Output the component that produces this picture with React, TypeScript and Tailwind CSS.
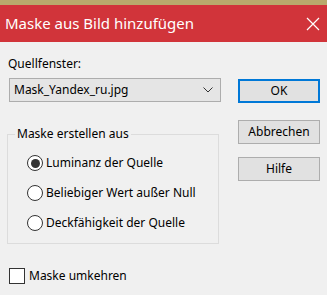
import React, { useState } from 'react';

const font = { fontFamily: '"Noto Sans", "Open Sans", sans-serif' };

const Radio: React.FC<{ checked: boolean; label: string; onClick: () => void }> = ({ checked, label, onClick }) => (
  <div className="flex items-center h-[30px] cursor-default" onClick={onClick}>
    <span className="w-[16px] h-[16px] rounded-full border border-[#333333] bg-white flex items-center justify-center">
      {checked && <span className="w-[9px] h-[9px] rounded-full bg-[#333333]" />}
    </span>
    <span className="ml-[3px] text-[12px] text-black">{label}</span>
  </div>
);

const Button: React.FC<{ label: string; primary?: boolean }> = ({ label, primary }) => (
  <button
    className={`w-[82px] h-[24px] bg-[#e1e1e1] text-[12px] text-black flex items-center justify-center ${
      primary ? 'border-2 border-[#0078d7]' : 'border border-[#adadad]'
    }`}
  >
    {label}
  </button>
);

const App: React.FC = () => {
  const [mode, setMode] = useState(0);
  const [invert, setInvert] = useState(false);
  const options = ['Luminanz der Quelle', 'Beliebiger Wert außer Null', 'Deckfähigkeit der Quelle'];

  return (
    <div className="w-[327px] h-[295px] bg-[#f0f0f0] overflow-hidden" style={font}>
      {/* Window edge + title bar */}
      <div className="h-[5px] bg-[#b9a96c]" />
      <div className="h-[37px] bg-[#d1343a] flex items-center justify-between pl-[5px] pr-[6px]">
        <span className="text-[15px] text-white">Maske aus Bild hinzufügen</span>
        <svg width="14" height="14" viewBox="0 0 14 14" className="mr-[1px]">
          <path d="M1 1L13 13M13 1L1 13" stroke="white" strokeWidth="1.2" />
        </svg>
      </div>

      <div className="flex">
        {/* Left column */}
        <div className="w-[229px] pl-[7px]">
          <div className="mt-[14px] pl-[1px] text-[12px] leading-[16px] text-black">Quellfenster:</div>
          <div className="mt-[6px] ml-[2px] w-[212px] h-[24px] border border-[#adadad] bg-[#e5e5e5] flex items-center justify-between pl-[4px] pr-[7px]">
            <span className="text-[12px] text-black">Mask_Yandex_ru.jpg</span>
            <svg width="10" height="6" viewBox="0 0 10 6">
              <path d="M0.5 0.5L5 5L9.5 0.5" stroke="#333" strokeWidth="1" fill="none" />
            </svg>
          </div>

          {/* Group box */}
          <div className="relative mt-[32px] w-[212px] h-[110px] border border-[#dcdcdc] pl-[19px] pt-[13px]">
            <span className="absolute -top-[9px] left-[7px] px-[2px] bg-[#f0f0f0] text-[12px] leading-[16px] text-black">
              Maske erstellen aus
            </span>
            {options.map((o, i) => (
              <Radio key={o} label={o} checked={mode === i} onClick={() => setMode(i)} />
            ))}
          </div>

          <div className="mt-[23px] ml-[2px] flex items-center cursor-default" onClick={() => setInvert(!invert)}>
            <span className="w-[16px] h-[16px] border border-[#333333] bg-white flex items-center justify-center text-[11px]">
              {invert ? '✓' : ''}
            </span>
            <span className="ml-[4px] text-[12px] text-black">Maske umkehren</span>
          </div>
        </div>

        {/* Buttons */}
        <div className="ml-[9px] flex flex-col pt-[37px]">
          <Button label="OK" primary />
          <div className="mt-[17px]">
            <Button label="Abbrechen" />
          </div>
          <div className="mt-[13px]">
            <Button label="Hilfe" />
          </div>
        </div>
      </div>
    </div>
  );
};

export default App;
